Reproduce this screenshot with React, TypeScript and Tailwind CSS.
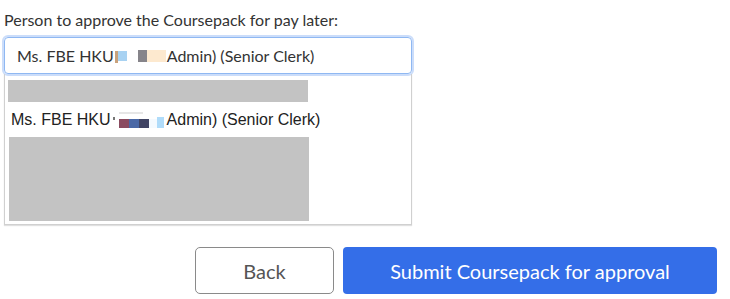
export default function App() {
  return (
    <div className="w-[730px] h-[299px] bg-white overflow-hidden font-['Lato',sans-serif]">
      <div className="pl-[4px] pt-[11px] w-[412px]">
        <label className="block text-[16px] leading-[18px] text-[#333]">
          Person to approve the Coursepack for pay later:
        </label>

        {/* input */}
        <div className="mt-[8px] h-[37px] rounded-[4px] border border-[#8fb8f2] shadow-[0_0_0_2px_rgba(140,180,245,0.45)] flex items-center pl-[12px] text-[16px] text-[#333]">
          <span>Ms. FBE HKU</span>
          <span className="flex items-center h-[14px] ml-[1px] mr-[1px]">
            <span className="w-[3px] h-[12px] bg-[#c9a27c] mt-[2px]" />
            <span className="w-[9px] h-[10px] bg-[#a8d2f2]" />
            <span className="w-[11px]" />
            <span className="w-[9px] h-[12px] bg-[#86848a]" />
            <span className="w-[19px] h-[12px] bg-[#fde9cf]" />
          </span>
          <span>Admin) (Senior Clerk)</span>
        </div>

        {/* dropdown */}
        <div className="border border-[#d0d0d0] border-t-0 shadow-[0_1px_1px_rgba(0,0,0,0.12)] pl-[3px] pt-[6px] pb-[3px] font-['Liberation_Sans',Arial,sans-serif]">
          <div className="w-[300px] h-[22px] bg-[#c3c3c3]" />
          <div className="h-[35px] flex items-center pl-[3px] text-[16px] text-[#222]">
            <span>Ms. FBE HKU</span>
            <span className="relative flex items-end h-[16px] ml-[8px] mr-[3px]">
              <span className="absolute left-[-6px] top-[5px] w-[2px] h-[3px] bg-[#777]" />
              <span className="absolute left-[0px] top-[0px] w-[24px] h-[2px] bg-[#e6e6e6]" />
              <span className="w-[10px] h-[9px] bg-[#8a4b60]" />
              <span className="w-[10px] h-[9px] bg-[#4a68a6]" />
              <span className="w-[10px] h-[9px] bg-[#404464]" />
              <span className="w-[8px] h-[9px] bg-[#f4faff]" />
              <span className="w-[7px] h-[11px] bg-[#b0dcfa]" />
            </span>
            <span>Admin) (Senior Clerk)</span>
          </div>
          <div className="w-[300px] h-[84px] bg-[#c3c3c3] ml-[1px]" />
        </div>
      </div>

      {/* buttons */}
      <div className="flex justify-end gap-[9px] pr-[13px] mt-[22px]">
        <button className="w-[139px] h-[47px] rounded-[5px] border border-[#8a8a8a] bg-white text-[20px] text-[#555]">
          Back
        </button>
        <button className="w-[374px] h-[47px] rounded-[4px] bg-[#346ee8] text-[20px] text-white">
          Submit Coursepack for approval
        </button>
      </div>
    </div>
  );
}
